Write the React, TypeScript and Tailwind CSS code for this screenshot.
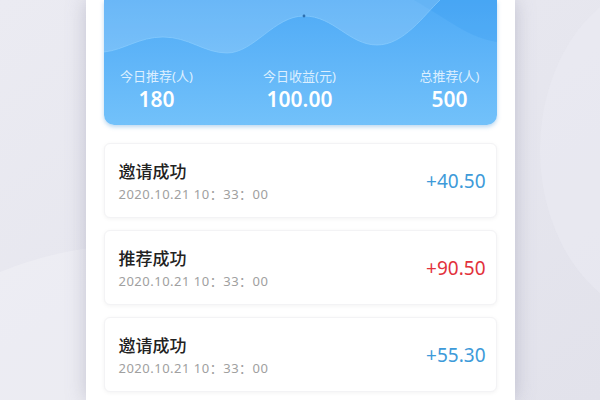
const stats = [
  { label: '今日推荐(人)', value: '180', width: 'w-[106px]' },
  { label: '今日收益(元)', value: '100.00', width: 'w-[180px]' },
  { label: '总推荐(人)', value: '500', width: 'w-[94px] ml-auto' },
];

const records = [
  { title: '邀请成功', time: '2020.10.21 10：33：00', amount: '+40.50', color: 'text-[#3d9ad9]' },
  { title: '推荐成功', time: '2020.10.21 10：33：00', amount: '+90.50', color: 'text-[#e2323c]' },
  { title: '邀请成功', time: '2020.10.21 10：33：00', amount: '+55.30', color: 'text-[#3d9ad9]' },
];

const cjk = "font-['Noto_Sans','Noto_Sans_CJK_SC',sans-serif]";

function Backdrop() {
  return (
    <svg className="absolute inset-0" width="600" height="400" viewBox="0 0 600 400">
      <defs>
        <linearGradient id="bg" x1="0" y1="0" x2="1" y2="1">
          <stop offset="0" stopColor="#ebebf2" />
          <stop offset="1" stopColor="#e2e2eb" />
        </linearGradient>
      </defs>
      <rect width="600" height="400" fill="url(#bg)" />
      <path d="M0,272 C30,260 60,252 90,248 L90,400 L0,400 Z" fill="#f0f0f5" opacity="0.6" />
      <ellipse cx="670" cy="150" rx="130" ry="170" fill="#ececf3" opacity="0.5" />
    </svg>
  );
}

function Wave() {
  return (
    <svg className="absolute inset-0" width="393" height="125" viewBox="0 0 393 125">
      <path d="M310,0 C345,20 365,38 393,42 L393,0 Z" fill="#2f97f2" opacity="0.2" />
      <path
        d="M0,0 L0,52 C20,50 35,37 59,37 C85,37 100,53 123,53 C150,53 170,16 200,16 C230,16 245,45 273,45 C300,45 320,15 336,0 Z"
        fill="#ffffff"
        opacity="0.16"
      />
      <path
        d="M0,52 C20,50 35,37 59,37 C85,37 100,53 123,53 C150,53 170,16 200,16 C230,16 245,45 273,45 C300,45 320,15 336,0"
        fill="none"
        stroke="#8fd0ff"
        strokeWidth="1"
        opacity="0.6"
      />
      <circle cx="200" cy="16" r="1.4" fill="#2d6fae" />
    </svg>
  );
}

export default function App() {
  return (
    <div className={`relative w-[600px] h-[400px] overflow-hidden flex justify-center ${cjk}`}>
      <Backdrop />
      <div className="relative w-[429px] h-full bg-white px-[18px] shadow-[0_0_18px_rgba(120,120,150,0.35)]">
        <div className="relative h-[125px] rounded-b-[10px] overflow-hidden bg-gradient-to-b from-[#4eaaf6] to-[#72c1fa] shadow-[0_2px_4px_rgba(60,140,210,0.35)]">
          <Wave />
          <div className="absolute left-0 right-0 top-[66px] flex">
            {stats.map((s) => (
              <div key={s.label} className={`flex flex-col items-center ${s.width}`}>
                <div className="text-[13px] leading-[20px] text-[#dcefff]">{s.label}</div>
                <div className="text-[21px] leading-[28px] font-semibold text-white mt-[-1px]">{s.value}</div>
              </div>
            ))}
          </div>
        </div>

        <div className="mt-[18px] flex flex-col gap-[12px]">
          {records.map((r, i) => (
            <div
              key={i}
              className="h-[75px] rounded-[6px] bg-white border border-[#f3f3f5] shadow-[0_1px_4px_rgba(0,0,0,0.05)] flex items-center justify-between pl-[14px] pr-[10px]"
            >
              <div className="flex flex-col pt-[2px]">
                <div className="text-[17px] leading-[24px] font-medium text-[#222]">{r.title}</div>
                <div className="text-[13px] leading-[18px] tracking-[0.5px] text-[#a0a0a0] mt-[1px]">{r.time}</div>
              </div>
              <div className={`text-[19px] leading-[24px] ${r.color}`}>{r.amount}</div>
            </div>
          ))}
        </div>
      </div>
    </div>
  );
}
